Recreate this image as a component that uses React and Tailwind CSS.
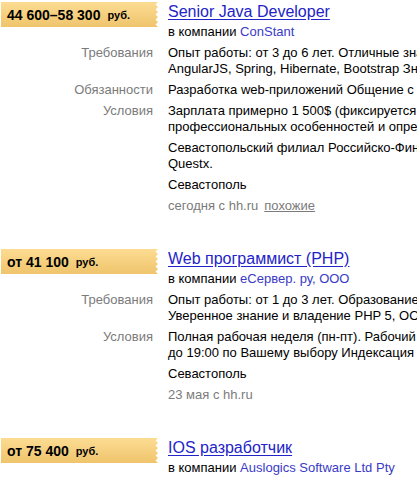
import React from "react";

const tagClip =
  "[clip-path:polygon(0_0,157px_0,154.5px_2.5px,157px_5px,154.5px_7.5px,157px_10px,154.5px_12.5px,157px_15px,154.5px_17.5px,157px_20px,154.5px_22.5px,157px_25px,0_25px)]";

function Tag({ amount }) {
  return (
    <div
      className={`ml-[1px] h-[25px] w-[157px] bg-linear-to-b from-[#fcdc92] to-[#efc46c] flex items-center pl-[6px] whitespace-nowrap ${tagClip}`}
    >
      <span className="text-[14px] font-bold text-black">{amount}</span>
      <span className="ml-[7px] text-[11px] font-bold text-black">руб.</span>
    </div>
  );
}

function Line({ children }) {
  return <div className="whitespace-nowrap">{children}</div>;
}

function Row({ label, children }) {
  return (
    <>
      <div className="text-right text-[#7b7b7b] whitespace-nowrap">{label}</div>
      <div className="flex flex-col gap-[5px]">{children}</div>
    </>
  );
}

function Card({ amount, title, company, rows, city, date, similar }) {
  return (
    <div className="grid grid-cols-[153px_330px] gap-x-[15px] gap-y-[5px] text-[13px] leading-4">
      <div>
        <Tag amount={amount} />
      </div>
      <div className="flex flex-col">
        <a className="text-[16px] leading-5 text-[#2323c8] underline underline-offset-[2px] whitespace-nowrap">
          {title}
        </a>
        <div className="mt-[2px] whitespace-nowrap text-black">
          в компании <span className="text-[#3a3ac6]">{company}</span>
        </div>
      </div>
      {rows &&
        rows.map((r, i) => (
          <Row key={i} label={r.label}>
            {r.paras.map((p, j) => (
              <div key={j} className="text-black">
                {p.map((l, k) => (
                  <Line key={k}>{l}</Line>
                ))}
              </div>
            ))}
          </Row>
        ))}
      {city && (
        <>
          <div />
          <div className="text-black">{city}</div>
        </>
      )}
      {date && (
        <>
          <div />
          <div className="text-[#7b7b7b] whitespace-nowrap">
            {date}
            {similar && <span className="ml-[6px] underline">похожие</span>}
          </div>
        </>
      )}
    </div>
  );
}

export default function App() {
  return (
    <div
      className="w-[417px] h-[484px] overflow-hidden bg-white pt-[2px]"
      style={{ fontFamily: '"Liberation Sans", Arial, sans-serif' }}
    >
      <div className="flex flex-col gap-[35px]">
        <Card
          amount="44 600–58 300"
          title="Senior Java Developer"
          company="ConStant"
          rows={[
            {
              label: "Требования",
              paras: [
                [
                  "Опыт работы: от 3 до 6 лет. Отличные знания Java",
                  "AngularJS, Spring, Hibernate, Bootstrap Знание SQL",
                ],
              ],
            },
            {
              label: "Обязанности",
              paras: [["Разработка web-приложений Общение с заказчиком"]],
            },
            {
              label: "Условия",
              paras: [
                [
                  "Зарплата примерно 1 500$ (фиксируется в договоре",
                  "профессиональных особенностей и определяется",
                ],
                ["Севастопольский филиал Российско-Финской компании", "Questx."],
              ],
            },
          ]}
          city="Севастополь"
          date="сегодня с hh.ru"
          similar
        />
        <Card
          amount="от 41 100"
          title="Web программист (PHP)"
          company="eСервер. ру, ООО"
          rows={[
            {
              label: "Требования",
              paras: [
                [
                  "Опыт работы: от 1 до 3 лет. Образование высшее",
                  "Уверенное знание и владение PHP 5, ООП, MySQL",
                ],
              ],
            },
            {
              label: "Условия",
              paras: [
                [
                  "Полная рабочая неделя (пн-пт). Рабочий день с 10:00",
                  "до 19:00 по Вашему выбору Индексация зарплаты",
                ],
              ],
            },
          ]}
          city="Севастополь"
          date="23 мая с hh.ru"
        />
        <Card
          amount="от 75 400"
          title="IOS разработчик"
          company="Auslogics Software Ltd Pty"
        />
      </div>
    </div>
  );
}
